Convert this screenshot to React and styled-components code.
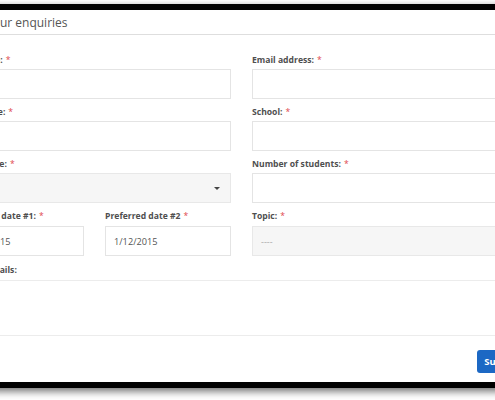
import React from 'react';
import styled, { createGlobalStyle } from 'styled-components';

const GlobalStyle = createGlobalStyle`
  html, body {
    margin: 0;
    padding: 0;
    background: #fff;
    overflow: hidden;
  }

  * {
    box-sizing: border-box;
  }
`;

const Stage = styled.div`
  height: 400px;
  padding-top: 4px;
  overflow: hidden;
  font-family: "Open Sans", "Noto Sans", sans-serif;
  color: #555;
`;

const Frame = styled.div`
  width: 603px;
  height: 384px;
  margin-left: -60px;
  border: 6px solid #000;
  background: #fff;
  box-shadow: 0 3px 8px rgba(0, 0, 0, 0.6);
  display: flex;
  flex-direction: column;
`;

const Header = styled.div`
  height: 25px;
  padding: 1px 0 0 40px;
  border-bottom: 1px solid #dedede;
`;

const Title = styled.h2`
  margin: 0;
  font-size: 12px;
  font-weight: 400;
  line-height: 23px;
  color: #555;
`;

const Body = styled.div`
  padding: 19px 12px 0;
`;

const Grid = styled.div`
  display: grid;
  grid-template-columns: 273px 273px;
  column-gap: 21px;
`;

const Pair = styled.div`
  display: grid;
  grid-template-columns: 1fr 1fr;
  column-gap: 21px;
`;

const Field = styled.div`
  display: flex;
  flex-direction: column;
  margin-bottom: ${p => (p.last ? '0' : '7px')};
  margin-top: ${p => (p.last ? '1px' : '0')};
  grid-column: ${p => (p.wide ? '1 / -1' : 'auto')};
`;

const Label = styled.label`
  font-size: 8.6px;
  font-weight: 700;
  line-height: 12px;
  color: #4f4f4f;
  margin-bottom: ${p => (p.tall ? '4px' : '3px')};
  white-space: nowrap;
`;

const Required = styled.span`
  color: #e0474c;
  font-weight: 400;
  margin-left: 3px;
`;

const TextInput = styled.input`
  height: 30px;
  width: 100%;
  border: 1px solid #e4e4e4;
  background: #fff;
  padding: 0 8px;
  font-family: inherit;
  font-size: 9.2px;
  color: #555;
  outline: none;
`;

const SelectBox = styled.div`
  position: relative;
  height: 30px;
  border: 1px solid #e8e8e8;
  background: #f6f6f6;
  padding: 0 8px;
  display: flex;
  align-items: center;
  font-size: 9px;
  color: #aaa;

  &::after {
    content: '';
    position: absolute;
    right: 10px;
    top: 13px;
    border-left: 3px solid transparent;
    border-right: 3px solid transparent;
    border-top: 3px solid #444;
  }
`;

const TextArea = styled.textarea`
  height: 56px;
  width: 100%;
  border: 1px solid #ececec;
  resize: none;
  font-family: inherit;
  outline: none;
`;

const Footer = styled.div`
  display: flex;
  justify-content: flex-end;
  padding: 14px 12px 0;
`;

const SubmitButton = styled.button`
  height: 23px;
  padding: 0 7px;
  border: none;
  border-radius: 3px;
  background: #1c68c4;
  color: #fff;
  font-family: inherit;
  font-size: 9.5px;
  font-weight: 700;
`;

const Req = () => <Required>*</Required>;

export default function App() {
  return (
    <>
      <GlobalStyle />
      <Stage>
        <Frame>
          <Header>
            <Title>Your enquiries</Title>
          </Header>
          <Body>
            <Grid>
              <Field>
                <Label>Full name:<Req /></Label>
                <TextInput />
              </Field>
              <Field>
                <Label>Email address:<Req /></Label>
                <TextInput />
              </Field>
              <Field>
                <Label>Telephone:<Req /></Label>
                <TextInput />
              </Field>
              <Field>
                <Label>School:<Req /></Label>
                <TextInput />
              </Field>
              <Field>
                <Label>Year range:<Req /></Label>
                <SelectBox />
              </Field>
              <Field>
                <Label>Number of students:<Req /></Label>
                <TextInput />
              </Field>
              <Pair>
                <Field>
                  <Label tall>Preferred date #1:<Req /></Label>
                  <TextInput defaultValue="1/12/2015" />
                </Field>
                <Field>
                  <Label tall>Preferred date #2<Req /></Label>
                  <TextInput defaultValue="1/12/2015" />
                </Field>
              </Pair>
              <Field>
                <Label tall>Topic:<Req /></Label>
                <SelectBox>----</SelectBox>
              </Field>
              <Field wide last>
                <Label tall>Other details:</Label>
                <TextArea />
              </Field>
            </Grid>
          </Body>
          <Footer>
            <SubmitButton>Submit</SubmitButton>
          </Footer>
        </Frame>
      </Stage>
    </>
  );
}
